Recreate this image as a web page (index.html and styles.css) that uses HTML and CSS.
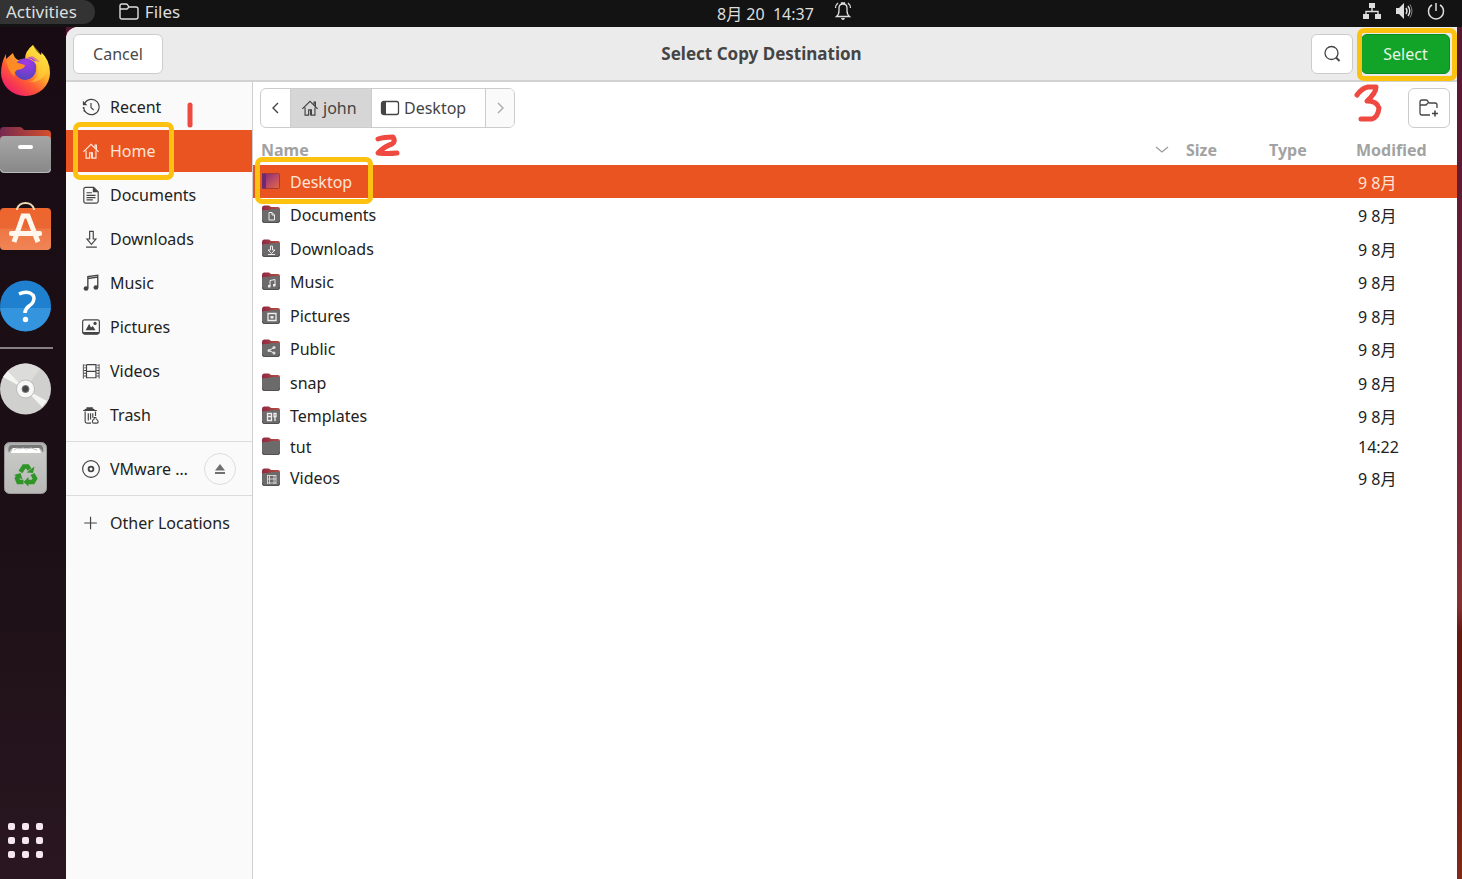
FILE: index.html
```
<!DOCTYPE html>
<html lang="en">
<head>
<meta charset="utf-8">
<title>Select Copy Destination</title>
<link rel="stylesheet" href="styles.css">
</head>
<body>
<svg class="defs" aria-hidden="true">
  <defs>
    <linearGradient id="flap" x1="0" x2="1" y1="0" y2="0"><stop offset="0" stop-color="#8f2844"/><stop offset="1" stop-color="#b5503f"/></linearGradient>
    <linearGradient id="desk" x1="0" x2="1" y1="0" y2="1"><stop offset="0" stop-color="#7a2a78"/><stop offset=".5" stop-color="#b84868"/><stop offset="1" stop-color="#e5683f"/></linearGradient>
    <symbol id="folder" viewBox="0 0 20 20">
      <path d="M1 4q0-2.500 2-2.500h5l2 1.500h7q2 0 2 2v5H1z" fill="url(#flap)"/>
      <path d="M1 7.500Q1 6 2.500 6H8l2-1h7q2 0 2 2v9q0 3-2 3H3q-2 0-2-3z" fill="#6c6a6b"/>
      <path d="M1.500 16q0 2.500 2 2.500h13q2 0 2-2.500" fill="none" stroke="#505050"/>
    </symbol>
    <symbol id="house" viewBox="0 0 20 20">
      <path d="M1.500 11 10 2.500 18.500 11M14.500 6V3.500h1.500V8M4.500 9.500v8.500h4v-6h3v6h4V9.500" fill="none" stroke="currentColor" stroke-width="1.300"/>
      <path d="M10 12h2v6h-2z" fill="currentColor"/>
    </symbol>
  </defs>
</svg>

<header class="topbar">
  <button class="activities">Activities</button>
  <button class="app-menu">
    <svg width="20" height="18" viewBox="0 0 20 18"><path d="M1 14V3q0-2 2-2h4q1.500 0 2 1.500T10.500 4H17q2 0 2 2v8q0 2-2 2H3q-2 0-2-2z" fill="none" stroke="currentColor" stroke-width="1.400"/><path d="M1 6h7l2-2" fill="none" stroke="currentColor" stroke-width="1.400"/></svg>
    Files
  </button>
  <button class="clock">
    <span>8月 20&nbsp; 14:37</span>
    <svg width="18" height="20" viewBox="0 0 18 20" fill="none" stroke="currentColor" stroke-width="1.300"><path d="M2.500 15.500q2.500-2 2.500-6V7q0-4 4-4t4 4v2.500q0 4 2.500 6zM4 2Q1.500 4 1.500 7M14 2q2.500 2 2.500 5M7.500 3V2h3v1"/><path d="M7 17h4q-.5 2-2 2t-2-2z" fill="currentColor" stroke="none"/></svg>
  </button>
  <button class="status" aria-label="System status">
    <svg width="18" height="18" viewBox="0 0 18 18"><path d="M6 1h6v5H6zM0 12h6v5H0zM12 12h6v5h-6z" fill="currentColor"/><path d="M9 6v4M3 12V9.500h12V12" fill="none" stroke="currentColor" stroke-width="1.400"/></svg>
    <svg width="18" height="18" viewBox="0 0 18 18"><path d="M1 6h3l5-5v16l-5-5H1z" fill="currentColor"/><path d="M11 6q2 3 0 6M13 4q3.500 5 0 10" fill="none" stroke="currentColor" stroke-width="1.400"/><path d="M15 2.500q4 6.500 0 13" fill="none" stroke="#888"/></svg>
    <svg width="18" height="18" viewBox="0 0 18 18"><path d="M9 1v8M5 3Q1.500 5 1.500 9.500a7.500 7.500 0 0 0 15 0Q16.500 5 13 3" fill="none" stroke="currentColor" stroke-width="1.500"/></svg>
  </button>
</header>

<div class="desktop">
  <nav class="dock" aria-label="Dock">
    <button class="launcher" aria-label="Firefox">
      <svg width="52" height="54" viewBox="0 0 52 54">
        <defs>
          <linearGradient id="fx" x1=".85" y1=".1" x2=".2" y2=".95"><stop offset="0" stop-color="#fff04a"/><stop offset=".35" stop-color="#ffb52c"/><stop offset=".65" stop-color="#ff5a35"/><stop offset="1" stop-color="#f01c6c"/></linearGradient>
          <radialGradient id="fp" cx=".55" cy=".2" r=".9"><stop offset="0" stop-color="#a638e8"/><stop offset="1" stop-color="#4b46b8"/></radialGradient>
        </defs>
        <path d="M33 2q3 7 8 10 1-1 0-3 9 8 9 21a24.500 23 0 0 1-49 0Q1 20 6 11v5l7-6q1 5 5 7l7-1Q25 8 33 2z" fill="url(#fx)"/>
        <path d="M17 19q8-7 16-1 4 2 3 10a11 11 0 0 1-21 2q-1-6 2-11z" fill="url(#fp)"/>
        <path d="M6 17q4-2 9 2l10 3q0 4-8 5-4 3-2 7-7-5-9-17z" fill="#ff8b24"/>
        <path d="M25 16q5-2 9 2l6 1q-5-5-8-6z" fill="#a93adf"/>
        <path d="M33 2q-8 7-4 12 9 2 9 13 0 10-9 12 14 1 18-12Q45 14 33 2z" fill="#ffd83a" opacity=".5"/>
      </svg>
    </button>
    <button class="launcher" aria-label="Files">
      <svg width="52" height="50" viewBox="0 0 52 50">
        <defs>
          <linearGradient id="ff" x1="0" x2="1"><stop offset="0" stop-color="#762a50"/><stop offset="1" stop-color="#d5502b"/></linearGradient>
          <linearGradient id="fg" x1="0" x2="0" y1="0" y2="1"><stop offset="0" stop-color="#a6a6a6"/><stop offset="1" stop-color="#888"/></linearGradient>
        </defs>
        <path d="M0 7q0-4 4-4h16q2 0 4 3h23q4 0 4 4v20H0z" fill="url(#ff)"/>
        <rect x="0" y="12" width="51" height="37" rx="4" fill="url(#fg)"/>
        <path d="M.5 45q.5 3.500 4 3.500h42q4 0 4-3.500" fill="none" stroke="#bbb"/>
        <rect x="18" y="21" width="15" height="4" rx="2" fill="#fff"/>
      </svg>
    </button>
    <button class="launcher" aria-label="Ubuntu Software">
      <svg width="52" height="52" viewBox="0 1 52 52">
        <defs><linearGradient id="sw" x1="0" x2="0" y1="0" y2="1"><stop offset="0" stop-color="#ee652d"/><stop offset=".48" stop-color="#ea6733"/><stop offset=".5" stop-color="#ee7744"/><stop offset="1" stop-color="#f08456"/></linearGradient></defs>
        <rect y="8" width="51" height="42" rx="4" fill="url(#sw)"/>
        <path d="M17 10V9q2-6 8.500-6T34 9v1" fill="none" stroke="#eed9b5" stroke-width="2"/>
        <path d="M14 42l9-26h5l10 26" fill="none" stroke="#fff6ee" stroke-width="5"/>
        <rect x="9" y="31" width="33" height="5" rx="2" fill="#fff6ee"/>
      </svg>
    </button>
    <button class="launcher" aria-label="Help">
      <svg width="52" height="52" viewBox="0 0 52 52">
        <circle cx="25.500" cy="26" r="25.500" fill="#1f80d0"/>
        <path d="M.1 28h50.800A25.500 25.500 0 0 1 .1 28z" fill="#3494de"/>
        <path d="M19 14q6-3 11-1 6 3 3 9-1 2-4 4-4 3-4 7" fill="none" stroke="#fff" stroke-width="3.500"/>
        <circle cx="25.500" cy="39.500" r="2.700" fill="#fff"/>
      </svg>
    </button>
    <hr class="dock-line">
    <button class="launcher" aria-label="Disc">
      <svg width="52" height="52" viewBox="0 0 52 52">
        <circle cx="25.500" cy="26" r="25.500" fill="#d0d0cf"/>
        <path d="M25 26 3 14 8 8zM25 26l22 12-5 6z" fill="#f4f4f3"/>
        <path d="M25 26 8 8Q24-6 40 6z" fill="#dcdcdb"/>
        <circle cx="25.500" cy="26" r="9" fill="#f7f7f7" stroke="#bbb"/>
        <circle cx="25.500" cy="26" r="3.500" fill="#444" stroke="#777"/>
      </svg>
    </button>
    <button class="launcher" aria-label="Trash">
      <svg width="52" height="52" viewBox="0 0 52 52">
        <defs><linearGradient id="tr" x1="0" x2="0" y1="0" y2="1"><stop offset="0" stop-color="#aaa"/><stop offset=".2" stop-color="#c8c8c6"/><stop offset="1" stop-color="#b8b8b6"/></linearGradient></defs>
        <rect x="4.500" y=".5" width="42" height="51" rx="5" fill="url(#tr)" stroke="#999"/>
        <path d="M9 11q-2-8 3-8h28q4 0 3 8-1-4-4-5H13q-3 1-4 5z" fill="#777"/>
        <path d="M11 11l2-5h26l2 5z" fill="#fff"/><path d="M14 8l3-2 2 1 4-1 3 1 5-1 6 2" fill="none" stroke="#bbb"/>
        <g fill="none" stroke="#2f9527" stroke-width="4.500"><path d="M20.500 30l3.500-5.500h3.500l2 3"/><path d="M32.500 32l2.500 4.500-2 3.500h-5"/><path d="M23.500 40h-5l-1.500-3.500 2-3.500"/></g>
        <path d="M26.500 30.500l6.500.5 1.500-6.500zM28.500 35v9.500l-5-4.500zM14 33l6.500-2 2 6.500z" fill="#2f9527"/>
      </svg>
    </button>
    <button class="launcher apps" aria-label="Show Applications">
      <svg width="52" height="36" viewBox="0 0 52 36" fill="#f5e6ef"><rect x="8" width="7" height="7" rx="2"/><rect x="22" width="7" height="7" rx="2"/><rect x="36" width="7" height="7" rx="2"/><rect x="8" y="14" width="7" height="7" rx="2"/><rect x="22" y="14" width="7" height="7" rx="2"/><rect x="36" y="14" width="7" height="7" rx="2"/><rect x="8" y="28" width="7" height="7" rx="2"/><rect x="22" y="28" width="7" height="7" rx="2"/><rect x="36" y="28" width="7" height="7" rx="2"/></svg>
    </button>
  </nav>

  <main class="dialog">
    <header class="titlebar">
      <button class="btn cancel">Cancel</button>
      <h1 class="title">Select Copy Destination</h1>
      <div class="title-actions">
        <button class="btn square" aria-label="Search">
          <svg width="18" height="18" viewBox="0 0 18 18" fill="none" stroke="#444"><circle cx="8.500" cy="8" r="6.500" stroke-width="1.300"/><path d="m13 12.500 3.500 3.500" stroke-width="2"/></svg>
        </button>
        <div class="marked">
          <button class="btn select">Select</button>
          <span class="mark mark-select"></span>
          <svg class="digit digit-three" width="30" height="40" viewBox="0 0 30 40" role="img" aria-label="Step 3"><path d="M4 12Q9 5 15 4h8q0 6-9 14 10 0 12 7-1 9-7 11H8" fill="none" stroke="#ef4a42" stroke-width="5" stroke-linecap="round" stroke-linejoin="round"/></svg>
        </div>
      </div>
    </header>

    <div class="content">
      <nav class="places" aria-label="Places">
        <div class="marked">
          <button class="place"><svg class="icon" viewBox="0 0 20 20" fill="none" stroke="currentColor" stroke-width="1.300"><path d="M3 6a8.500 8.500 0 1 1-1 4M10 5.500V10.500l3 3"/><path d="M1 3v5h5z" fill="currentColor" stroke="none"/><path d="M1.500 10q0 4 2.500 6.500" stroke-dasharray="2 1.500"/></svg>Recent</button>
          <svg class="digit digit-one" width="6" height="26" viewBox="0 0 6 26" role="img" aria-label="Step 1"><path d="M3 3v20" stroke="#ef4a42" stroke-width="5" stroke-linecap="round"/></svg>
        </div>
        <div class="marked">
          <button class="place active"><svg class="icon"><use href="#house"/></svg>Home</button>
          <span class="mark mark-home"></span>
        </div>
        <button class="place"><svg class="icon" viewBox="0 0 20 20" fill="none" stroke="currentColor" stroke-width="1.300"><path d="M4 1.500h9l5 5V17q0 2-2 2H4q-2 0-2-2V3.500q0-2 2-2zM5 7.500h6M5 10.500h10M5 13h10M5 15.500h7"/><path d="M12 1l6 6h-6z" fill="currentColor" stroke="none"/></svg>Documents</button>
        <button class="place"><svg class="icon" viewBox="0 0 20 20" fill="none" stroke="currentColor" stroke-width="1.300"><path d="M8.500 1.500h4V10h3l-5 6-5-6h3zM4.500 19h12"/></svg>Downloads</button>
        <button class="place"><svg class="icon" viewBox="0 0 20 20"><path d="M6.500 15.500V3l11-1.500v13M6.500 5l11-1.500" fill="none" stroke="currentColor" stroke-width="1.500"/><ellipse cx="4.500" cy="16" rx="2.700" ry="2.500" fill="currentColor"/><ellipse cx="15.500" cy="15" rx="2.700" ry="2.500" fill="currentColor"/></svg>Music</button>
        <button class="place"><svg class="icon" viewBox="0 0 20 20"><rect x=".7" y="2" width="18.600" height="15.500" rx="2" fill="none" stroke="currentColor" stroke-width="1.300"/><path d="M1 15.500h18q0 3-2 3H3q-2 0-2-3zM4 13.500l4-7 2 4 2-1.500 3 4.500z" fill="currentColor"/><circle cx="14.500" cy="6" r="1.800" fill="currentColor"/></svg>Pictures</button>
        <button class="place"><svg class="icon" viewBox="0 0 20 20" fill="none" stroke="currentColor"><path d="M5 3v15M15.500 3v15M5 3h11M5 10.500h11M5 17.500h11" stroke-width="1.300"/><path d="M1.500 2.500v16M19 2.500v16"/><path d="M3.500 3v15M17.500 3v15" stroke-width="3" stroke-dasharray="1 2"/></svg>Videos</button>
        <button class="place"><svg class="icon" viewBox="0 0 20 20" fill="none" stroke="currentColor" stroke-width="1.300"><path d="M1.500 5h15M3.500 6v11q0 2 2 2H10M15 6v5M7 8v8M9.500 8v7M12 8v5M13 13h3M14 14q-3 2-2.500 4 .5 1 2 1h3q1.500 0 1.500-1.500T15.500 14"/><path d="M1 5.500l3-2.500h1V1.500h7V3h1l3 2.500z" fill="currentColor" stroke="none"/></svg>Trash</button>
        <hr class="divider">
        <div class="place-row">
          <button class="place"><svg class="icon" viewBox="0 0 20 20" fill="none" stroke="currentColor"><circle cx="10" cy="10" r="9.300" stroke-width="1.300"/><circle cx="10" cy="10" r="2.700" stroke-width="2"/></svg>VMware …</button>
          <button class="eject" aria-label="Eject"><svg width="12" height="12" viewBox="0 0 12 12" fill="#707070"><path d="M6 1l5 6.500H1zM1 9h10v2H1z"/></svg></button>
        </div>
        <hr class="divider">
        <button class="place"><svg class="icon" viewBox="0 0 20 20"><path d="M2.500 10h14M9.500 3v14" stroke="currentColor" stroke-width="1.300"/></svg>Other Locations</button>
      </nav>

      <section class="browser">
        <div class="toolbar">
          <div class="path">
            <button class="seg arrow" aria-label="Back"><svg width="10" height="14" viewBox="0 0 10 14"><path d="M7 2 2 7l5 5" fill="none" stroke="#444" stroke-width="1.400"/></svg></button>
            <button class="seg current"><svg width="18" height="18"><use href="#house"/></svg>john</button>
            <button class="seg folder"><svg width="20" height="18" viewBox="0 0 20 18"><rect x="1.500" y="2.500" width="17" height="13" rx="2" fill="none" stroke="currentColor" stroke-width="1.300"/><path d="M2 3h4v12H2z" fill="currentColor"/></svg>Desktop</button>
            <button class="seg arrow" aria-label="Forward" disabled><svg width="10" height="14" viewBox="0 0 10 14"><path d="m3 2 5 5-5 5" fill="none" stroke="#aaa" stroke-width="1.400"/></svg></button>
          </div>
          <button class="btn square" aria-label="New Folder"><svg width="22" height="20" viewBox="0 0 22 20" fill="none" stroke="#444" stroke-width="1.300"><path d="M12 17H4q-2 0-2-2V4q0-2 2-2h4q1.500 0 2 1.500T11.500 5H17q2 0 2 2v3M2 7h6l2-2"/><path d="M17 12.500v6M14 15.500h6" stroke-width="1.600"/></svg></button>
        </div>

        <table class="files">
          <thead>
            <tr><th><span class="sort">Name<svg width="14" height="8" viewBox="0 0 14 8"><path d="m1 1 6 5 6-5" fill="none" stroke="#999" stroke-width="1.200"/></svg></span></th><th class="col-size">Size</th><th class="col-type">Type</th><th class="col-date">Modified</th></tr>
          </thead>
          <tbody>
            <tr class="selected"><td><div class="name marked"><svg class="icon" viewBox="0 0 20 20"><rect x="1.500" y="2.500" width="17" height="15" rx="1" fill="url(#desk)" stroke="#a33a35"/><path d="M1 2.500h4v15H1z" fill="#6c2a70"/></svg>Desktop<span class="mark mark-desktop"></span><svg class="digit digit-two" width="26" height="24" viewBox="0 0 26 24" role="img" aria-label="Step 2"><path d="M4 5q6-2 15-2 3 4-1 7-7 2-14 9 9 1 19 0" fill="none" stroke="#ef4a42" stroke-width="5" stroke-linecap="round" stroke-linejoin="round"/></svg></div></td><td></td><td></td><td>9 8月</td></tr>
            <tr><td><div class="name"><svg class="icon" viewBox="0 0 20 20"><use href="#folder"/><path d="M8 8.500h3l2.500 2.500v5H8zM11 8.500V11h2.500" fill="none" stroke="#eee"/></svg>Documents</div></td><td></td><td></td><td>9 8月</td></tr>
            <tr><td><div class="name"><svg class="icon" viewBox="0 0 20 20"><use href="#folder"/><path d="M9.500 8h2v4h2.500l-3.500 3.500L7 12h2.500zM7 16.500h7" fill="none" stroke="#eee"/></svg>Downloads</div></td><td></td><td></td><td>9 8月</td></tr>
            <tr><td><div class="name"><svg class="icon" viewBox="0 0 20 20"><use href="#folder"/><path d="M9 15V9.500l5-1V14" fill="none" stroke="#eee"/><path d="M7 14h2.500v2.500H7zM12 13h2.500v2.500H12z" fill="#eee"/></svg>Music</div></td><td></td><td></td><td>9 8月</td></tr>
            <tr><td><div class="name"><svg class="icon" viewBox="0 0 20 20"><use href="#folder"/><path d="M7 8.500h8v7H7z" fill="none" stroke="#eee" stroke-width="1.300"/><path d="M9.500 11h3v2.500h-3z" fill="#eee"/></svg>Pictures</div></td><td></td><td></td><td>9 8月</td></tr>
            <tr><td><div class="name"><svg class="icon" viewBox="0 0 20 20"><use href="#folder"/><path d="m13 9.500-5 3 5 2.500" fill="none" stroke="#eee"/><circle cx="13" cy="9.500" r="1.500" fill="#ddd"/><circle cx="8" cy="12.500" r="1.500" fill="#ddd"/><circle cx="13" cy="15" r="1.500" fill="#ddd"/></svg>Public</div></td><td></td><td></td><td>9 8月</td></tr>
            <tr><td><div class="name"><svg class="icon"><use href="#folder"/></svg>snap</div></td><td></td><td></td><td>9 8月</td></tr>
            <tr><td><div class="name"><svg class="icon" viewBox="0 0 20 20"><use href="#folder"/><path d="M6.500 8.500h4v7h-4zM6 11.500h5M13 8.500h2v3h-2zM14 12v4" fill="none" stroke="#eee" stroke-width="1.300"/></svg>Templates</div></td><td></td><td></td><td>9 8月</td></tr>
            <tr class="short"><td><div class="name"><svg class="icon"><use href="#folder"/></svg>tut</div></td><td></td><td></td><td>14:22</td></tr>
            <tr><td><div class="name"><svg class="icon" viewBox="0 0 20 20"><use href="#folder"/><path d="M6.500 8v9M8.500 8v9M13 8v9M15 8v9M6 8.500h9M6 12h9M6 16h9" fill="none" stroke="#ddd" stroke-width=".9"/></svg>Videos</div></td><td></td><td></td><td>9 8月</td></tr>
          </tbody>
        </table>
      </section>
    </div>
  </main>
</div>
</body>
</html>
```
FILE: styles.css
```
* { box-sizing: border-box; }
body {
  margin: 0;
  min-height: 100vh;
  display: flex;
  flex-direction: column;
  font: 16px/20px "Noto Sans", "Noto Sans CJK SC", sans-serif;
  color: #222;
  background: #131313;
}
button {
  font: inherit;
  color: inherit;
  background: none;
  border: 0;
  padding: 0;
  display: flex;
  align-items: center;
}
svg { flex: none; }
.defs { position: absolute; width: 0; height: 0; }

.topbar {
  height: 27px;
  display: grid;
  grid-template-columns: auto 1fr auto 1fr;
  align-items: start;
  color: #dedede;
}
.activities {
  height: 24px;
  padding: 0 18px 0 6px;
  font-size: 17px;
  background: #333;
  border-radius: 0 12px 12px 0;
}
.app-menu { height: 24px; gap: 6px; padding-left: 24px; font-size: 17px; }
.clock { height: 28px; gap: 20px; margin-right: -12px; }
.clock svg { margin-bottom: 6px; }
.status { height: 22px; gap: 14px; justify-self: end; padding-right: 17px; }

.desktop {
  flex: 1;
  display: flex;
  padding-right: 5px;
  background: linear-gradient(#541731, #76243a 50%, #86302e 68%, #64190f 71%, #6a1a12 82%, #84281a);
}
.dock {
  width: 66px;
  display: flex;
  flex-direction: column;
  padding: 16px 0 20px;
  background: linear-gradient(#190b13, #1c1016 60%, #2a1620);
}
.launcher { margin-bottom: 27px; }
.dock-line {
  width: 53px;
  height: 2px;
  margin: -12px 0 14px;
  border: 0;
  background: #867e83;
}
.apps { margin: auto 0 0; }

.dialog {
  flex: 1;
  min-width: 0;
  display: flex;
  flex-direction: column;
  background: #fff;
  border-radius: 12px 0 0 0;
  overflow: hidden;
}
.titlebar {
  position: relative;
  z-index: 1;
  height: 55px;
  display: grid;
  grid-template-columns: 1fr auto 1fr;
  align-items: center;
  padding: 0 7px;
  background: #ebebeb;
  border-bottom: 2px solid #d2d2d2;
}
.title { margin: 0; font-size: 17px; line-height: 20px; color: #444; }
.title-actions { display: flex; gap: 8px; justify-self: end; }
.btn {
  height: 40px;
  justify-content: center;
  color: #4a4a4a;
  background: #fff;
  border: 1px solid #ccc;
  border-radius: 6px;
}
.cancel { width: 90px; }
.square { width: 42px; }
.select { width: 89px; color: #e6f5e6; background: #12a329; border-color: #108a23; }

.marked { position: relative; }
.mark {
  position: absolute;
  border: 5px solid #fdc210;
  border-radius: 7px;
  pointer-events: none;
}
.mark-select { inset: -6px -7px -7px -4px; }
.mark-home { left: 7px; top: -8px; width: 101px; height: 58px; }
.mark-desktop { left: -6px; top: -14px; width: 118px; height: 47px; }
.digit { position: absolute; z-index: 1; }
.digit-one { left: 121px; top: 16px; }
.digit-two { left: 113px; top: -37px; }
.digit-three { right: 67px; top: 49px; }

.content { flex: 1; display: flex; }
.places {
  width: 187px;
  display: flex;
  flex-direction: column;
  gap: 2px;
  padding-top: 4px;
  background: #fafafa;
  border-right: 1px solid #cfcfcf;
}
.place {
  width: 100%;
  height: 42px;
  gap: 10px;
  padding-left: 16px;
  white-space: nowrap;
}
.icon { width: 20px; height: 20px; }
.place .icon { width: 18px; height: 18px; color: #444; }
.place.active, .place.active .icon { color: #ffe3d6; }
.place.active { background: #e95420; }
.divider { width: 100%; height: 1px; margin: 3px 0 4px; border: 0; background: #dcdcdc; }
.place-row { display: flex; align-items: center; padding-right: 16px; }
.place-row .place { flex: 1; width: auto; }
.eject {
  width: 32px;
  height: 32px;
  justify-content: center;
  border: 1px solid #ddd;
  border-radius: 50%;
}

.browser { flex: 1; min-width: 0; }
.toolbar { display: flex; justify-content: space-between; padding: 6px 7px; }
.path {
  display: flex;
  height: 40px;
  color: #444;
  border: 1px solid #ccc;
  border-radius: 6px;
  overflow: hidden;
}
.seg { gap: 4px; }
.seg + .seg { border-left: 1px solid #ccc; }
.arrow { width: 29px; justify-content: center; }
.arrow:disabled { background: #fafafa; }
.current { width: 81px; padding-left: 10px; background: #d6d6d6; }
.folder { width: 114px; padding-left: 8px; }

.files { width: 100%; border-collapse: collapse; table-layout: fixed; }
.files th {
  height: 31px;
  padding: 0 0 0 8px;
  text-align: left;
  color: #a2a2a2;
}
.sort { display: flex; align-items: center; justify-content: space-between; padding-right: 9px; }
.col-size { width: 83px; }
.col-type { width: 87px; }
.col-date { width: 109px; }
.files tbody tr { height: 34px; }
.files tbody tr:nth-child(odd) { height: 33px; }
.files tbody tr.short { height: 28px; }
.files td { padding: 0 0 0 8px; }
.files td:last-child { padding: 2px 0 0 10px; }
.files .short td:last-child { padding-top: 0; }
.name { display: flex; align-items: center; gap: 9px; }
.name .icon { margin-bottom: 2px; }
.files .selected { color: #ffe3d6; background: #e95420; }
```
